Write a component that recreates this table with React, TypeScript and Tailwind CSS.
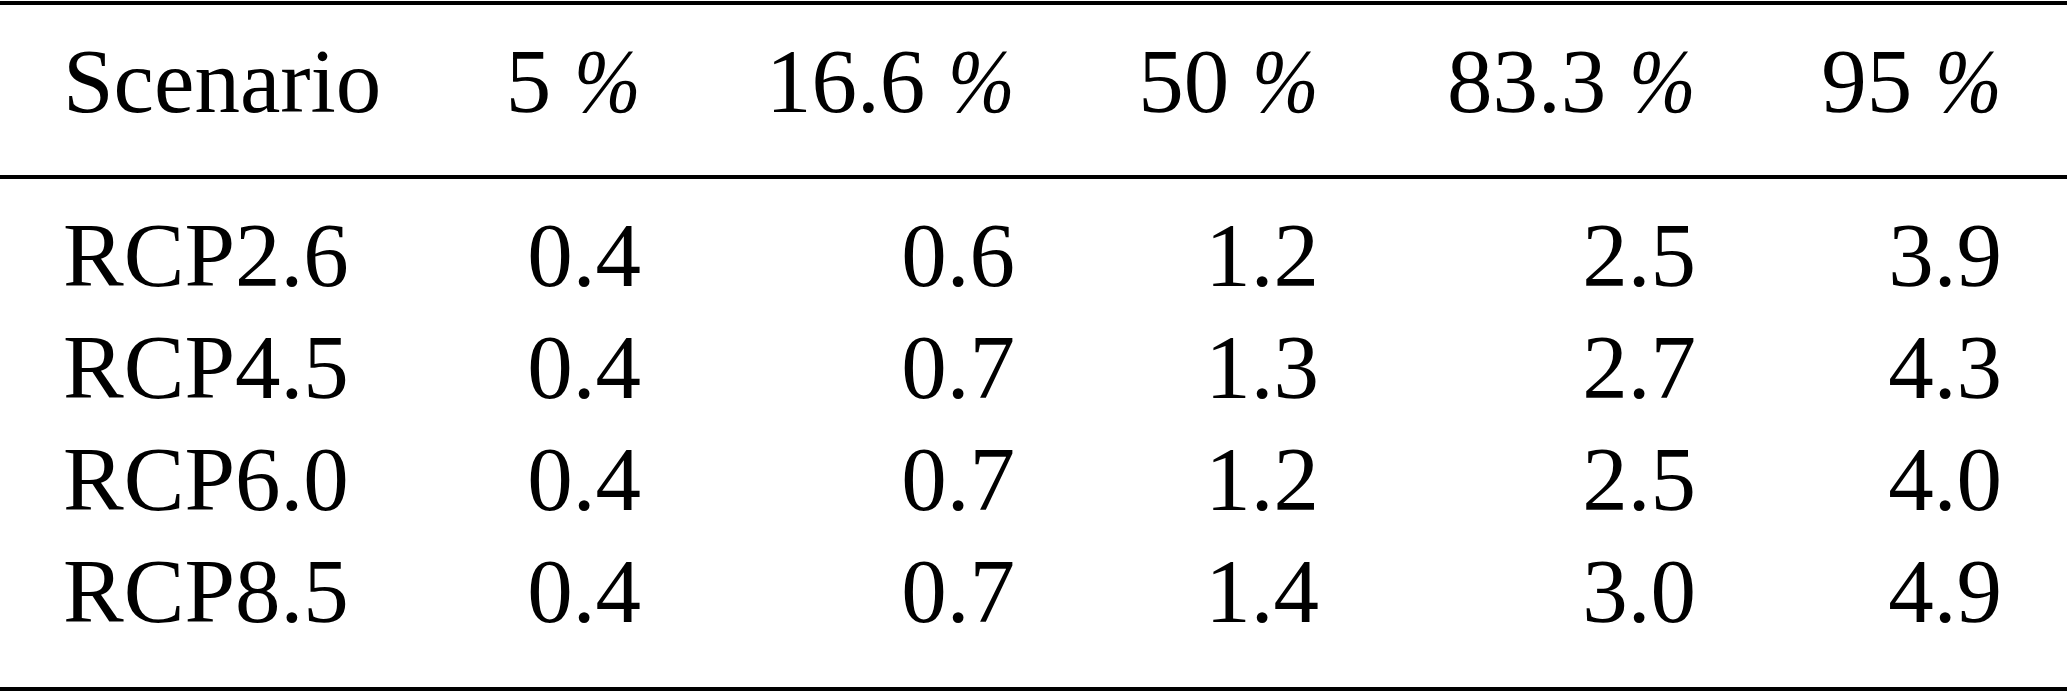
import React from "react";

type Cell = { v: string; pct?: boolean };

const header: Cell[] = [
  { v: "Scenario" },
  { v: "5", pct: true },
  { v: "16.6", pct: true },
  { v: "50", pct: true },
  { v: "83.3", pct: true },
  { v: "95", pct: true },
];
const rows: string[][] = [
  ["RCP2.6", "0.4", "0.6", "1.2", "2.5", "3.9"],
  ["RCP4.5", "0.4", "0.7", "1.3", "2.7", "4.3"],
  ["RCP6.0", "0.4", "0.7", "1.2", "2.5", "4.0"],
  ["RCP8.5", "0.4", "0.7", "1.4", "3.0", "4.9"],
];

function Row({ cells }: { cells: Cell[] }) {
  return (
    <div className="grid grid-cols-[320px_258px_374px_304px_377px_306px] h-[112px] leading-[112px]">
      {cells.map((c, i) => (
        <div key={i} className={i === 0 ? "text-left whitespace-nowrap" : "text-right whitespace-nowrap"}>
          {c.v}
          {c.pct && <span className="inline-block italic ml-[14px] scale-x-[0.88] origin-right">%</span>}
        </div>
      ))}
    </div>
  );
}

export default function App() {
  return (
    <div
      className="w-[2067px] h-[691px] bg-white text-black pt-[1px] text-[91px]"
      style={{ fontFamily: '"Liberation Serif", "Times New Roman", serif' }}
    >
      <div className="h-[4px] bg-black" />
      <div className="pl-[63px] pr-[65px] pt-[21px] pb-[37px]">
        <Row cells={header} />
      </div>
      <div className="h-[4px] bg-black" />
      <div className="pl-[63px] pr-[65px] pt-[21px] pb-[39px]">
        {rows.map((r, i) => (
          <Row key={i} cells={r.map((v) => ({ v }))} />
        ))}
      </div>
      <div className="h-[4px] bg-black" />
    </div>
  );
}
